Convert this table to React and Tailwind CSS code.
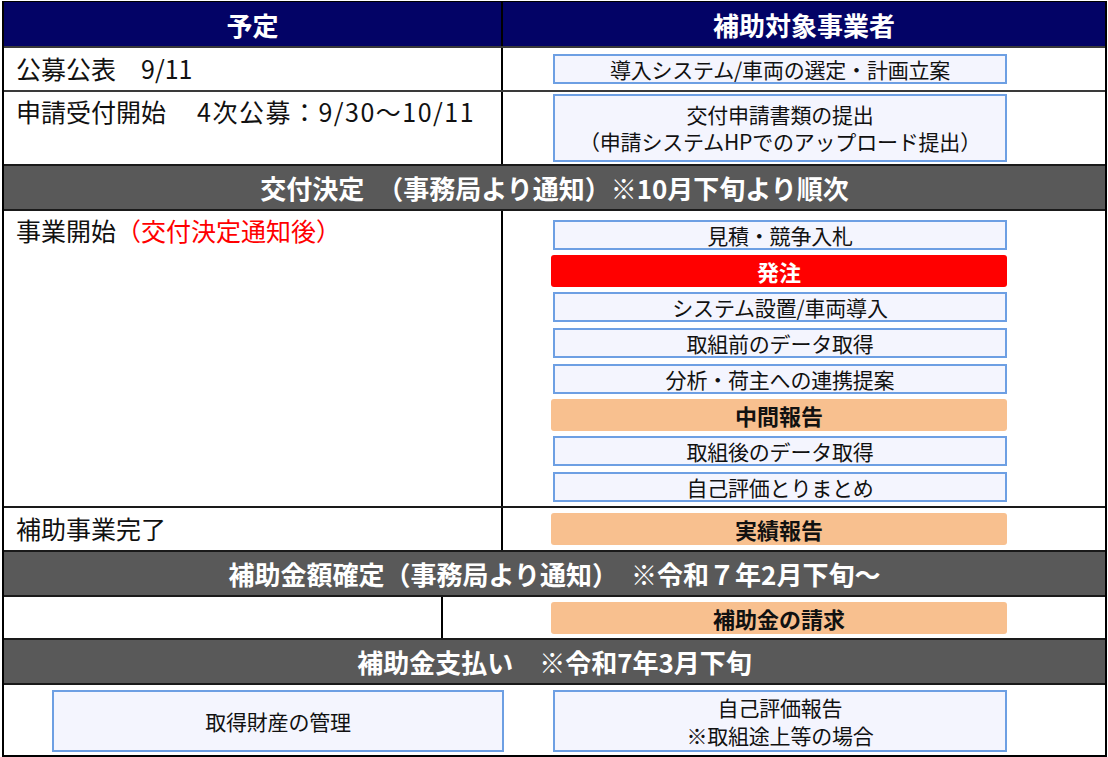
import React from "react"

const font = { fontFamily: '"Noto Sans CJK JP", "Noto Sans", sans-serif' }

function BlueBox({ children, className = "" }) {
  return (
    <div
      className={`flex flex-col items-center justify-center border-2 border-[#6d9fe3] bg-[#f4f5fe] text-center text-[21px] text-[#111] tracking-[-0.2px] ${className}`}
    >
      {children}
    </div>
  )
}

function FillBox({ children, red }) {
  return (
    <div
      className={`ml-[48px] flex h-[32px] w-[456px] items-center justify-center rounded-[3px] text-[22px] font-bold leading-none ${
        red ? "bg-[#ff0000] text-white" : "bg-[#f8c08f] text-[#111]"
      }`}
    >
      {children}
    </div>
  )
}

function Band({ children }) {
  return (
    <div className="flex h-[45px] items-center justify-center border-t-2 border-[#1a1a1a] bg-[#595959] text-[26px] font-bold text-white">
      {children}
    </div>
  )
}

const steps = [
  { text: "見積・競争入札" },
  { text: "発注", red: true },
  { text: "システム設置/車両導入" },
  { text: "取組前のデータ取得" },
  { text: "分析・荷主への連携提案" },
  { text: "中間報告", fill: true },
  { text: "取組後のデータ取得" },
  { text: "自己評価とりまとめ" },
]

export default function App() {
  return (
    <div className="h-[757px] w-[1108px] bg-white pt-[1px]" style={font}>
      <div className="ml-[2px] flex w-[1105px] flex-col border-x-2 border-b-2 border-black">
        {/* header */}
        <div className="flex h-[45px] border-t border-black bg-[#030366] text-[26px] font-bold text-white">
          <div className="flex w-[499px] items-center justify-center border-r-2 border-black">予定</div>
          <div className="flex flex-1 items-center justify-center">補助対象事業者</div>
        </div>

        {/* 公募公表 */}
        <div className="flex h-[44px] border-t-2 border-[#3a3a3a]">
          <div className="flex w-[499px] items-center border-r-2 border-black pl-[12px] text-[25px] text-[#111]">
            公募公表　9/11
          </div>
          <div className="flex flex-1 items-center">
            <BlueBox className="ml-[50px] h-[30px] w-[454px] leading-[25px]">導入システム/車両の選定・計画立案</BlueBox>
          </div>
        </div>

        {/* 申請受付 */}
        <div className="flex h-[74px] border-t-2 border-[#3a3a3a]">
          <div className="w-[499px] border-r-2 border-black pl-[12px] pt-[4px] text-[25px] leading-[30px] text-[#111]">
            申請受付開始<span className="ml-[31px] tracking-[1.5px]">4次公募：9/30～10/11</span>
          </div>
          <div className="flex flex-1 items-center">
            <BlueBox className="ml-[50px] h-[68px] w-[454px] leading-[27px]">
              <p>
                交付申請書類の提出
                <br />
                （申請システムHPでのアップロード提出）
              </p>
            </BlueBox>
          </div>
        </div>

        <Band>交付決定　（事務局より通知）※10月下旬より順次</Band>

        {/* 事業開始 */}
        <div className="flex h-[297px] border-t-2 border-[#1a1a1a]">
          <div className="w-[499px] border-r-2 border-black pl-[12px] pt-[4px] text-[25px] leading-[30px] text-[#111]">
            事業開始<span className="text-[#ff0000]">（交付決定通知後）</span>
          </div>
          <div className="flex flex-1 flex-col pt-[6px]">
            {steps.map((s) => (
              <div key={s.text} className="flex h-[36px] items-center">
                {s.red || s.fill ? (
                  <FillBox red={s.red}>{s.text}</FillBox>
                ) : (
                  <BlueBox className="ml-[50px] h-[30px] w-[454px] leading-[25px]">{s.text}</BlueBox>
                )}
              </div>
            ))}
          </div>
        </div>

        {/* 補助事業完了 */}
        <div className="flex h-[44px] border-t-2 border-[#1a1a1a]">
          <div className="flex w-[499px] items-center border-r-2 border-black pl-[12px] text-[25px] text-[#111]">
            補助事業完了
          </div>
          <div className="flex flex-1 items-center">
            <FillBox>実績報告</FillBox>
          </div>
        </div>

        <Band>補助金額確定（事務局より通知）　※令和７年2月下旬～</Band>

        {/* 補助金の請求 */}
        <div className="flex h-[43px] border-t-2 border-[#1a1a1a]">
          <div className="w-[439px] border-r-2 border-black" />
          <div className="flex flex-1 items-center pl-[60px]">
            <FillBox>補助金の請求</FillBox>
          </div>
        </div>

        <Band>補助金支払い　※令和7年3月下旬</Band>

        {/* 最終 */}
        <div className="flex h-[72px] items-start border-t-2 border-[#1a1a1a] pt-[5px]">
          <BlueBox className="ml-[48px] h-[62px] w-[452px] leading-[28px]">取得財産の管理</BlueBox>
          <BlueBox className="ml-[49px] h-[62px] w-[454px] leading-[28px]">
            <p>
              自己評価報告
              <br />
              ※取組途上等の場合
            </p>
          </BlueBox>
        </div>
      </div>
    </div>
  )
}
